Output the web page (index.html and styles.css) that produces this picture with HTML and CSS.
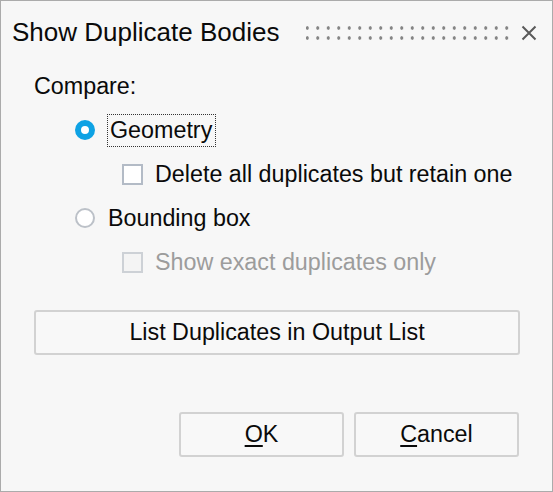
FILE: index.html
```html
<!DOCTYPE html>
<html>
<head>
<meta charset="utf-8">
<link rel="stylesheet" href="styles.css">
</head>
<body>
<div class="window">
  <div class="titlebar">
    <div class="title">Show Duplicate Bodies</div>
    <div class="grip"></div>
    <div class="close">
      <svg width="16" height="16" viewBox="0 0 16 16"><path d="M1.5 1.5 L14.5 14.5 M14.5 1.5 L1.5 14.5" stroke="#5a5a5a" stroke-width="2" fill="none"/></svg>
    </div>
  </div>
  <div class="content">
    <div class="row">Compare:</div>
    <div class="row opt">
      <span class="radio checked"></span>
      <span class="label focus">Geometry</span>
    </div>
    <div class="row sub">
      <span class="check"></span>
      <span class="label">Delete all duplicates but retain one</span>
    </div>
    <div class="row opt">
      <span class="radio"></span>
      <span class="label">Bounding box</span>
    </div>
    <div class="row sub disabled">
      <span class="check"></span>
      <span class="label">Show exact duplicates only</span>
    </div>
    <button class="btn wide">List Duplicates in Output List</button>
    <div class="actions">
      <button class="btn small"><u>O</u>K</button>
      <button class="btn small"><u>C</u>ancel</button>
    </div>
  </div>
</div>
</body>
</html>
```
FILE: styles.css
```css
html, body {
  margin: 0;
  padding: 0;
  background: #f7f7f7;
}
.window {
  width: 553px;
  height: 492px;
  box-sizing: border-box;
  border: 1px solid #ababab;
  background: #f7f7f7;
  font-family: "Liberation Sans", Arial, sans-serif;
  color: #0a0a0a;
}
.titlebar {
  height: 63px;
  display: flex;
  align-items: center;
  padding-left: 11px;
}
.title {
  font-size: 26px;
  width: 294px;
  white-space: nowrap;
}
.grip {
  width: 206px;
  height: 16px;
  margin-top: 0;
  background-image: radial-gradient(circle, #858585 1.5px, transparent 1.9px);
  background-size: 10.5px 10px;
  background-position: -4px -2px;
}
.close {
  margin-left: 9px;
  width: 16px;
  height: 16px;
  display: flex;
  margin-top: 1px;
}
.content {
  padding: 0 33px;
  font-size: 23.3px;
}
.row {
  height: 44px;
  display: flex;
  align-items: center;
}
.opt {
  padding-left: 41px;
}
.sub {
  padding-left: 88px;
}
.radio {
  width: 20px;
  height: 20px;
  box-sizing: border-box;
  border-radius: 50%;
  border: 2px solid #bcc1c8;
  background: #fff;
  margin-right: 13px;
  flex: none;
}
.radio.checked {
  border: 6px solid #0ea2e4;
  background: #fff;
}
.check {
  width: 21px;
  height: 21px;
  box-sizing: border-box;
  border: 2px solid #b3bbc6;
  background: #fff;
  margin-right: 12px;
  flex: none;
}
.label {
  white-space: nowrap;
}
.focus {
  outline: 1px dotted #333;
  padding: 2px 3px 2px 2px;
}
.disabled {
  color: #9c9c9c;
}
.disabled .check {
  border-color: #cdd1d6;
  background: #f4f4f4;
}
.btn {
  font-family: "Liberation Sans", Arial, sans-serif;
  font-size: 23.3px;
  color: #0a0a0a;
  background: #f8f8f8;
  border: 2px solid #d2d2d2;
  border-radius: 3px;
  height: 45px;
  padding: 0;
  display: flex;
  align-items: center;
  justify-content: center;
}
.btn u {
  text-underline-offset: 3px;
}
.wide {
  width: 486px;
  margin-top: 26px;
}
.actions {
  display: flex;
  justify-content: flex-end;
  gap: 10px;
  margin-top: 57px;
}
.small {
  width: 165px;
}
```
